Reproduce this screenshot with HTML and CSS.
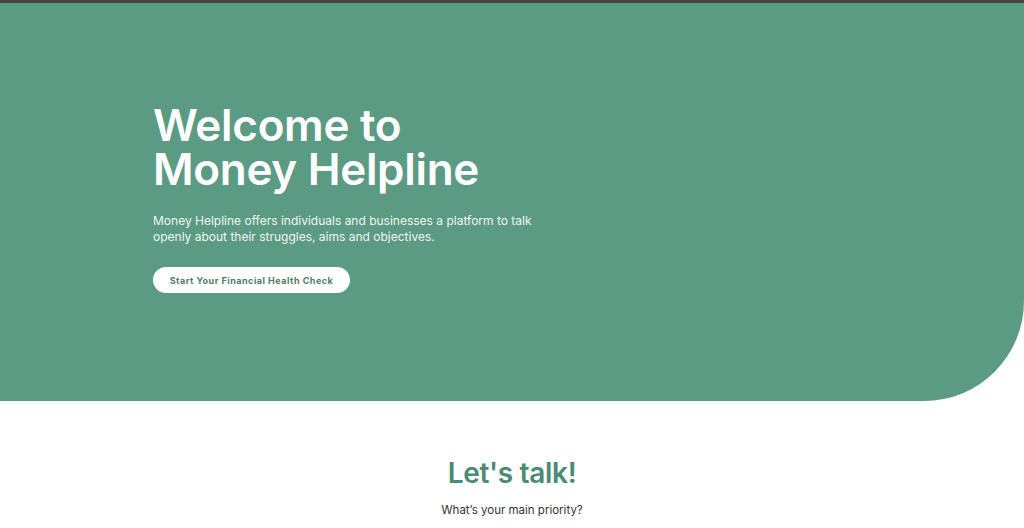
FILE: index.html
```html
<!DOCTYPE html>
<html>
<head>
<meta charset="utf-8">
<link rel="stylesheet" href="styles.css">
</head>
<body>
<div class="topbar"></div>
<section class="hero">
  <div class="hero-inner">
    <h1 class="hero-title">Welcome to<br>Money Helpline</h1>
    <p class="hero-text">Money Helpline offers individuals and businesses a platform to talk<br>openly about their struggles, aims and objectives.</p>
    <a class="hero-btn" href="#">Start Your Financial Health Check</a>
  </div>
</section>
<section class="talk">
  <h2 class="talk-title">Let's talk!</h2>
  <p class="talk-sub">What’s your main priority?</p>
</section>
</body>
</html>
```
FILE: styles.css
```css
html, body {
  margin: 0;
  padding: 0;
  background: #ffffff;
  font-family: "Inter", "Open Sans", sans-serif;
}
.topbar {
  height: 3px;
  background: #454545;
}
.hero {
  height: 398px;
  background: #5b9b84;
  border-bottom-right-radius: 100px;
  box-sizing: border-box;
  padding: 100px 0 0 153px;
}
.hero-title {
  margin: 0;
  color: #ffffff;
  font-size: 44px;
  font-weight: 600;
  line-height: 44px;
  letter-spacing: -0.3px;
}
.hero-text {
  margin: 22px 0 0 0;
  color: #f0f5f3;
  font-size: 12px;
  line-height: 16px;
  font-weight: 400;
}
.hero-btn {
  display: inline-flex;
  align-items: center;
  justify-content: center;
  margin-top: 22px;
  width: 197px;
  height: 26px;
  border-radius: 13px;
  background: #ffffff;
  color: #4d7c6c;
  font-size: 9px;
  font-weight: 700;
  letter-spacing: 0.5px;
  text-decoration: none;
}
.talk {
  text-align: center;
  padding-top: 54px;
}
.talk-title {
  margin: 0;
  color: #4a8b73;
  font-size: 28px;
  font-weight: 600;
  line-height: 36px;
  letter-spacing: -0.3px;
}
.talk-sub {
  margin: 11px 0 0 0;
  color: #333333;
  font-size: 11.5px;
  line-height: 16px;
}
```
